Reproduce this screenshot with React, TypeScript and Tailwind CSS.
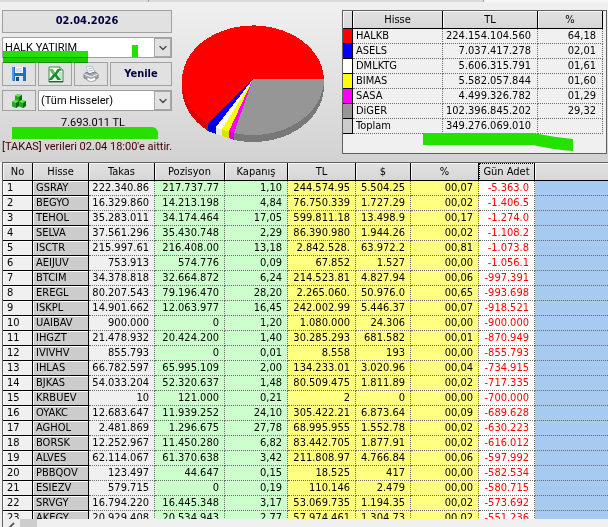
import { clsx } from 'clsx';
import { ChevronDown } from 'lucide-react';
import type { ReactNode } from 'react';

type Holding = [
  name: string,
  takas: string,
  pozisyon: string,
  kapanis: string,
  tl: string,
  usd: string,
  percent: string,
  gunAdet: string,
];

const holdings: Holding[] = [
  ['GSRAY', '222.340.86', '217.737.77', '1,10', '244.574.95', '5.504.25', '00,07', '-5.363.0'],
  ['BEGYO', '16.329.860', '14.213.198', '4,84', '76.750.339', '1.727.29', '00,02', '-1.406.5'],
  ['TEHOL', '35.283.011', '34.174.464', '17,05', '599.811.18', '13.498.9', '00,17', '-1.274.0'],
  ['SELVA', '37.561.296', '35.430.748', '2,29', '86.390.980', '1.944.26', '00,02', '-1.108.2'],
  ['ISCTR', '215.997.61', '216.408.00', '13,18', '2.842.528.', '63.972.2', '00,81', '-1.073.8'],
  ['AEIJUV', '753.913', '574.776', '0,09', '67.852', '1.527', '00,00', '-1.056.1'],
  ['BTCIM', '34.378.818', '32.664.872', '6,24', '214.523.81', '4.827.94', '00,06', '-997.391'],
  ['EREGL', '80.207.543', '79.196.470', '28,20', '2.265.060.', '50.976.0', '00,65', '-993.698'],
  ['ISKPL', '14.901.662', '12.063.977', '16,45', '242.002.99', '5.446.37', '00,07', '-918.521'],
  ['UAIBAV', '900.000', '0', '1,20', '1.080.000', '24.306', '00,00', '-900.000'],
  ['IHGZT', '21.478.932', '20.424.200', '1,40', '30.285.293', '681.582', '00,01', '-870.949'],
  ['IVIVHV', '855.793', '0', '0,01', '8.558', '193', '00,00', '-855.793'],
  ['IHLAS', '66.782.597', '65.995.109', '2,00', '134.233.01', '3.020.96', '00,04', '-734.915'],
  ['BJKAS', '54.033.204', '52.320.637', '1,48', '80.509.475', '1.811.89', '00,02', '-717.335'],
  ['KRBUEV', '10', '121.000', '0,21', '2', '0', '00,00', '-700.000'],
  ['OYAKC', '12.683.647', '11.939.252', '24,10', '305.422.21', '6.873.64', '00,09', '-689.628'],
  ['AGHOL', '2.481.869', '1.296.675', '27,78', '68.995.955', '1.552.78', '00,02', '-630.223'],
  ['BORSK', '12.252.967', '11.450.280', '6,82', '83.442.705', '1.877.91', '00,02', '-616.012'],
  ['ALVES', '62.114.067', '61.370.638', '3,42', '211.808.97', '4.766.84', '00,06', '-597.992'],
  ['PBBQOV', '123.497', '44.647', '0,15', '18.525', '417', '00,00', '-582.534'],
  ['ESIEZV', '579.715', '0', '0,19', '110.146', '2.479', '00,00', '-580.715'],
  ['SRVGY', '16.794.220', '16.445.348', '3,17', '53.069.735', '1.194.35', '00,02', '-573.692'],
  ['AKEGY', '20.929.408', '20.534.943', '2,77', '57.974.461', '1.304.73', '00,02', '-551.236'],
];

const columns = [
  { label: 'No', width: 'w-[30px]' },
  { label: 'Hisse', width: 'w-14' },
  { label: 'Takas', width: 'w-[66px]' },
  { label: 'Pozisyon', width: 'w-[70px]' },
  { label: 'Kapanış', width: 'w-[63px]' },
  { label: 'TL', width: 'w-[68px]' },
  { label: '$', width: 'w-[55px]' },
  { label: '%', width: 'w-[68px]' },
];

// cell colours of everything after the name column
const cellTones = [
  'bg-[#f0f0f0]',
  'bg-[#ccffcc]',
  'bg-[#ccffcc]',
  'bg-[#ffff80]',
  'bg-[#ffff80]',
  'bg-[#ffff80]',
  'bg-white text-[#ff0000]',
];

const summary = [
  { name: 'HALKB', tl: '224.154.104.560', percent: '64,18', swatch: 'bg-[#ff0000]' },
  { name: 'ASELS', tl: '7.037.417.278', percent: '02,01', swatch: 'bg-[#0000ff]' },
  { name: 'DMLKTG', tl: '5.606.315.791', percent: '01,61', swatch: 'bg-white' },
  { name: 'BIMAS', tl: '5.582.057.844', percent: '01,60', swatch: 'bg-[#ffff00]' },
  { name: 'SASA', tl: '4.499.326.782', percent: '01,29', swatch: 'bg-[#ff00ff]' },
  { name: 'DiGER', tl: '102.396.845.202', percent: '29,32', swatch: 'bg-[#969696]' },
  { name: 'Toplam', tl: '349.276.069.010', percent: '', swatch: 'bg-[#cccccc]' },
];

const headCell =
  'h-[18px] border-r border-b border-black bg-linear-to-b from-[#e2e2e2] to-[#d6d6d6] p-0 text-center font-normal shadow-[inset_1px_1px_0_#f6f6f6]';
const dottedCell = 'h-[15px] border-r border-b border-dotted border-[#6b6b6b] p-0';
const buttonStyle =
  'flex items-center justify-center border border-[#a0a0a0] bg-[#e1e1e1] text-[11px] font-bold text-[#000040]';

function ToolButton({ label, children }: { label: string; children: ReactNode }) {
  return (
    <button type="button" aria-label={label} className={clsx(buttonStyle, 'h-6 w-[34px] shrink-0')}>
      {children}
    </button>
  );
}

function Picker({ label, value, className }: { label: string; value: string; className?: string }) {
  return (
    <div className={clsx('relative flex h-[21px] border border-[#a0a0a0] bg-white', className)}>
      <select
        aria-label={label}
        defaultValue={value}
        className="w-full appearance-none bg-transparent pl-0.5 font-[Roboto,sans-serif] text-[11px] leading-4 text-black outline-none"
      >
        <option>{value}</option>
      </select>
      <span className="pointer-events-none absolute inset-y-0 right-0 flex w-[17px] items-center justify-center border border-[#a8a8a8] bg-[#e1e1e1]">
        <ChevronDown size={12} strokeWidth={3} color="#505050" className="shrink-0" />
      </span>
    </div>
  );
}

function SaveIcon() {
  return (
    <svg width="16" height="16" viewBox="0 0 16 16">
      <path d="M1 1h13l1 1v13H2l-1-1z" fill="#1f6fc4" />
      <path d="M1 1h2v13H1z" fill="#4a9be8" />
      <path d="M4 1h8v6H4z" fill="#f4f6f8" />
      <path d="M5 3h6M5 5h6" stroke="#b9c6d6" />
      <path d="M4 10h8v5H4z" fill="#dfe5ec" />
      <path d="M5 11h3v4H5z" fill="#174a86" />
    </svg>
  );
}

function ExcelIcon() {
  return (
    <svg width="17" height="17" viewBox="0 0 17 17">
      <path d="M2 1h11l3 3v12H2z" fill="#f3f9f2" stroke="#3c8a4c" />
      <path d="M13 1v3h3" fill="#cfe5d0" stroke="#3c8a4c" />
      <path d="M12 7h3M12 9h3M12 11h3M12 13h3" stroke="#9ccb9f" />
      <path d="M2 3h3.500l2.500 4 2.500-4H14L9.800 8.500 14 14h-3.500L8 10.500 5 14H1.500l4.500-5.500z" fill="#1d8a37" />
      <path d="M2 3h3.500l2.500 4-2 1.500z" fill="#6cbd58" />
      <path d="M2 15h14v1H2z" fill="#12602b" />
    </svg>
  );
}

function PrinterIcon() {
  return (
    <svg width="16" height="16" viewBox="0 0 16 16">
      <path d="M3 1l6-1 3 6-6 2z" fill="#fff" stroke="#a9b4c0" strokeWidth=".8" />
      <path d="M5 3l4-1M6 5l4-1" stroke="#7fa8d2" strokeWidth=".8" />
      <path d="M1 8l3-2 2 2 6-2 3 2v4l-7 3-7-3z" fill="#a9adb2" stroke="#666b70" strokeWidth=".8" />
      <path d="M1 8l7 3 7-3" fill="none" stroke="#eef0f2" />
      <path d="M4 11l4 1.500 4-1.500 1 3-5 2-4-2z" fill="#fff" stroke="#8a9097" strokeWidth=".8" />
    </svg>
  );
}

function CubesIcon() {
  return (
    <svg width="14" height="14" viewBox="0 0 14 14">
      {[
        [3, 0],
        [0, 6],
        [7, 6],
      ].map(([x, y]) => (
        <g key={`${x}-${y}`} transform={`translate(${x} ${y})`}>
          <path d="M0 1.500L3 0l4 1v5L4 8 0 6.500z" fill="#25a820" />
          <path d="M0 1.500L3 0l4 1-3 2z" fill="#6fe25c" />
          <path d="M7 1L4 3v5l3-2z" fill="#0d6a12" />
        </g>
      ))}
    </svg>
  );
}

function SharePie() {
  return (
    <svg
      width="142"
      height="120"
      viewBox="0 0 142 120"
      shapeRendering="crispEdges"
      role="img"
      aria-label="Hisse dağılımı"
      className="shrink-0"
    >
      <path d="M0 55A71 56 0 0 0 26 99v8A71 56 0 0 1 0 63z" fill="#e00000" />
      <path d="M26 99l8 4v7l-8-3z" fill="#0000d8" />
      <path d="M34 103l6 2v7l-6-2z" fill="#e8e8e8" />
      <path d="M40 105l7 2v7l-7-2z" fill="#e0e000" />
      <path d="M47 107l5 2v7l-5-2z" fill="#e000e0" />
      <path d="M52 109A71 56 0 0 0 142 55v8A71 56 0 0 1 52 116z" fill="#787878" />
      <path d="M71 55H142A71 55 0 1 0 26 99z" fill="#ff0000" />
      <path d="M71 55L26 99l8 4z" fill="#0000ff" />
      <path d="M71 55L34 103l6 3z" fill="#ffffff" />
      <path d="M71 55L40 105l7 3z" fill="#ffff00" />
      <path d="M71 55L47 107l5 2z" fill="#ff00ff" />
      <path d="M71 55L52 109A71 56 0 0 0 142 55z" fill="#969696" />
    </svg>
  );
}

function SummaryTable() {
  return (
    <section className="h-36 w-[265px] shrink-0 border border-[#606060] bg-[#f0f0f0]">
      <table className="table-fixed border-separate border-spacing-0 leading-[14px]">
        <thead>
          <tr>
            <th className={clsx(headCell, 'w-2.5')} />
            <th className={clsx(headCell, 'w-[90px]')}>Hisse</th>
            <th className={clsx(headCell, 'w-[95px]')}>TL</th>
            <th className={clsx(headCell, 'w-[65px]')}>%</th>
          </tr>
        </thead>
        <tbody>
          {summary.map((row) => (
            <tr key={row.name}>
              <td className={clsx('border-r border-b border-black p-0', row.swatch)} />
              <td className={clsx(dottedCell, 'pl-[3px]')}>{row.name}</td>
              <td className={clsx(dottedCell, 'pr-1.5 text-right')}>{row.tl}</td>
              <td className={clsx(dottedCell, 'pr-1.5 text-right')}>{row.percent}</td>
            </tr>
          ))}
        </tbody>
      </table>
    </section>
  );
}

function HoldingsTable() {
  return (
    <section className="ml-0.5 min-h-0 flex-1 overflow-hidden border-t border-l border-[#606060]">
      <table className="w-full table-fixed border-separate border-spacing-0 leading-[14px]">
        <thead>
          <tr>
            {columns.map((column) => (
              <th key={column.label} className={clsx(headCell, column.width)}>
                {column.label}
              </th>
            ))}
            <th className={clsx(headCell, 'w-14 whitespace-nowrap outline outline-dotted -outline-offset-1')}>
              Gün Adet
            </th>
            <th className={clsx(headCell, 'border-r-0')} />
          </tr>
        </thead>
        <tbody>
          {holdings.map(([name, ...values], index) => (
            <tr key={name}>
              <td className="h-[15px] border-r border-b border-black bg-[#f0f0f0] p-0 pl-1 shadow-[inset_1px_1px_0_#ffffff]">
                {index + 1}
              </td>
              <td className="border-r border-b border-black bg-[#cccccc] p-0 pl-[3px] shadow-[inset_1px_1px_0_#ffffff]">
                {name}
              </td>
              {values.map((value, i) => (
                <td key={i} className={clsx(dottedCell, 'pr-[5px] text-right', cellTones[i])}>
                  {value}
                </td>
              ))}
              <td className={clsx(dottedCell, 'border-r-0 bg-[#a6caf0]')} />
            </tr>
          ))}
        </tbody>
      </table>
    </section>
  );
}

export default function App() {
  return (
    <main className="flex h-screen flex-col overflow-hidden bg-[#f0f0f0] font-['DejaVu_Sans_Condensed','DejaVu_Sans',sans-serif] text-[11px] text-black">
      <div className="flex h-0.5 shrink-0">
        <div className="w-[149px] border-r border-[#a0a0a0] bg-[#dadada]" />
        <div className="w-[335px] border-r border-[#a0a0a0] bg-[#dadada]" />
        <div className="flex-1 bg-[#f6f6f6]" />
      </div>

      <header className="relative flex h-40 shrink-0 justify-between bg-linear-to-b from-[#f0f0f0] to-[#d2d2d2] pt-2 pr-px pl-0.5">
        <div className="flex w-[170px] shrink-0 flex-col">
          <button type="button" className={clsx(buttonStyle, 'h-[23px] w-full')}>
            02.04.2026
          </button>
          <Picker label="Kurum" value="HALK YATIRIM" className="mt-1" />
          <div className="mt-1 flex gap-0.5">
            <ToolButton label="Kaydet">
              <SaveIcon />
            </ToolButton>
            <ToolButton label="Excel">
              <ExcelIcon />
            </ToolButton>
            <ToolButton label="Yazdır">
              <PrinterIcon />
            </ToolButton>
            <button type="button" className={clsx(buttonStyle, 'h-6 flex-1')}>
              Yenile
            </button>
          </div>
          <div className="mt-1 flex gap-0.5">
            <button type="button" aria-label="Hisseler" className={clsx(buttonStyle, 'h-[21px] w-[34px] shrink-0')}>
              <CubesIcon />
            </button>
            <Picker label="Hisse" value="(Tüm Hisseler)" className="flex-1" />
          </div>
          <p className="mt-1 pl-3 text-center font-[Roboto,sans-serif] text-[11px] leading-4">7.693.011 TL</p>
          <p className="mt-2 font-[Roboto,sans-serif] text-[11px] leading-4 whitespace-nowrap text-[#400000]">
            [TAKAS] verileri 02.04 18:00&apos;e aittir.
          </p>
        </div>

        <div className="flex flex-1 pt-3.5 pl-2.5">
          <SharePie />
        </div>

        <SummaryTable />

        {/* marker strokes over the panel */}
        <div className="pointer-events-none absolute top-[49px] left-[3px] h-3 w-[85px] bg-[#26e000] mix-blend-multiply" />
        <div className="pointer-events-none absolute top-[43px] left-[132px] h-3 w-1.5 bg-[#26e000]" />
        <div className="pointer-events-none absolute top-[125px] left-3 h-3 w-[146px] rounded-tr-md bg-[#26e000]" />
        <svg
          width="150"
          height="18"
          viewBox="0 0 150 18"
          className="pointer-events-none absolute top-[131px] right-[35px]"
        >
          <path d="M0 0H110Q130 4 150 6V18Q132 17 110 12H0z" fill="#26e000" />
        </svg>
      </header>

      <HoldingsTable />

      <footer className="ml-0.5 flex h-2 shrink-0 overflow-hidden border-l border-[#606060] bg-[#f0f0f0]">
        <svg width="17" height="17" viewBox="0 0 17 17" className="shrink-0">
          <path d="M11 4L7 8l4 4" fill="none" stroke="#606060" strokeWidth="2" />
        </svg>
        <div className="h-4 w-[17px] bg-[#cdcdcd]" />
      </footer>
    </main>
  );
}
